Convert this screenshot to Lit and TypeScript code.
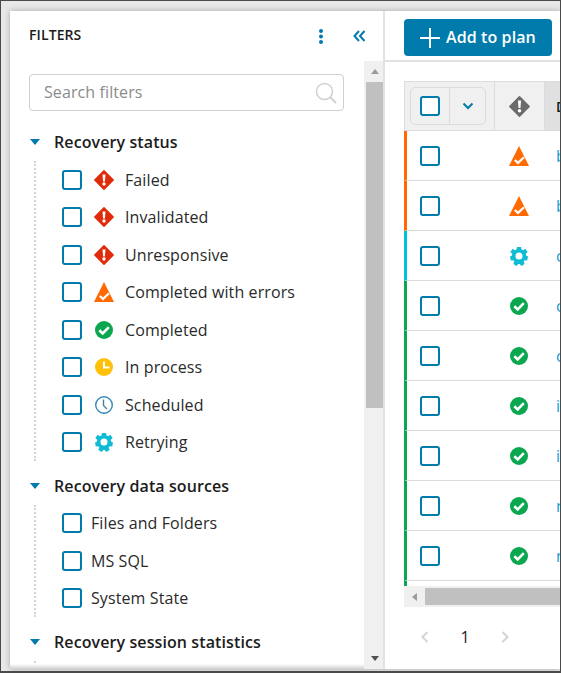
import { LitElement, html, css, svg } from "lit";
import { customElement } from "lit/decorators.js";

const diamond = (c: string, s = 20) => svg`<svg class="ic" width="${s}" height="${s}" viewBox="0 0 20 20"><path d="M10 .8 L19.200 10 L10 19.200 L.8 10 Z" fill="${c}" stroke="${c}" stroke-width="1.500" stroke-linejoin="round"/><path d="M8.500 4.400h3l-.6 7H9.100Z" fill="#fff"/><circle cx="10" cy="14" r="1.700" fill="#fff"/></svg>`;
const warn = svg`<svg class="ic" width="20" height="20" viewBox="0 0 20 20"><path d="M10 0 L20 20 H0 Z" fill="#ff6a00"/><path d="M5.800 14 L9 16.900 L15 11.200" fill="none" stroke="#fff" stroke-width="2.200"/></svg>`;
const ok = svg`<svg class="ic" width="20" height="20" viewBox="0 0 20 20"><circle cx="10" cy="10" r="9" fill="#0aa650"/><path d="M5.300 10.200 L8.700 13.400 L14.800 7.100" fill="none" stroke="#fff" stroke-width="2.600"/></svg>`;
const proc = svg`<svg class="ic" width="20" height="20" viewBox="0 0 20 20"><circle cx="10" cy="10" r="9" fill="#ffc107"/><path d="M10 4.500 V10.500 H15.500" fill="none" stroke="#fff" stroke-width="2"/></svg>`;
const sched = svg`<svg class="ic" width="20" height="20" viewBox="0 0 20 20"><circle cx="10" cy="10" r="8.300" fill="none" stroke="#2f8bb5" stroke-width="1.400"/><path d="M9.500 4.500 V10.500 L13 14" fill="none" stroke="#4a7f9a" stroke-width="1.400"/></svg>`;
const gear = svg`<svg class="ic" width="20" height="20" viewBox="0 0 20 20"><path fill="#0fbcd4" fill-rule="evenodd" d="M8 1h4l.5 2.500 1.600.7 2.200-1.400 2.400 3.200-1.900 1.700.2 1.800 2 1.100-.8 3.800-2.500-.1-1 1.500 1 2.300-3.400 1.900-1.500-2h-1.600l-1.500 2-3.400-1.900 1-2.300-1-1.500-2.500.1-.8-3.800 2-1.100.2-1.800L1.300 6l2.400-3.200 2.200 1.400 1.600-.7Z M10 6.500a3.500 3.500 0 1 0 0 7 3.500 3.500 0 0 0 0-7Z"/></svg>`;

const groups = [
  { title: "Recovery status", items: [
    ["Failed", diamond("#e02b0a")], ["Invalidated", diamond("#e02b0a")], ["Unresponsive", diamond("#e02b0a")],
    ["Completed with errors", warn], ["Completed", ok], ["In process", proc], ["Scheduled", sched], ["Retrying", gear],
  ] },
  { title: "Recovery data sources", items: [["Files and Folders", null], ["MS SQL", null], ["System State", null]] },
  { title: "Recovery session statistics", items: [] },
];

const rows = [
  ["#ff6a00", warn, "b"], ["#ff6a00", warn, "b"], ["#00c0e0", gear, "c"], ["#0aa650", ok, "c"], ["#0aa650", ok, "c"],
  ["#0aa650", ok, "i"], ["#0aa650", ok, "i"], ["#0aa650", ok, "n"], ["#0aa650", ok, "n"],
];

@customElement("app-root")
export class AppRoot extends LitElement {
  static styles = css`
    :host { display: block; width: 561px; height: 673px; overflow: hidden; font-family: "Open Sans", sans-serif; color: #1c1c1c; letter-spacing: .1px; }
    * { box-sizing: border-box; }
    .frame { width: 561px; height: 673px; background: #e8e8e8; border: 1px solid #4a4a4a; border-bottom-width: 2px; padding: 10px 0 2px 9px; overflow: hidden; }
    .panel { height: 100%; background: #fff; display: flex; overflow: hidden; box-shadow: 0 0 6px rgba(0,0,0,.28); }
    .side { width: 375px; flex: none; border-right: 2px solid #e2e2e2; display: flex; flex-direction: column; }
    .side-head { height: 50px; flex: none; display: flex; align-items: center; padding: 0 17px 0 19px; }
    .side-head b { font-size: 14px; font-weight: 600; flex: 1; position: relative; top: -2px; }
    .kebab { margin-right: 29px; display: block; }
    .side-body { flex: 1; display: flex; min-height: 0; }
    .filters { flex: 1; min-width: 0; padding: 13px 19px 0; overflow: hidden; position: relative; }
    .filters::after { content: ""; position: absolute; left: 0; right: 0; bottom: 0; height: 5px; background: linear-gradient(#fff, #cfcfcf); }
    .search { height: 37px; width: 315px; border: 1px solid #cfcfcf; border-radius: 4px; display: flex; align-items: center; justify-content: space-between; padding: 0 6px 2px 14px; font-size: 16px; color: #8b8b8b; }
    .search svg { margin-top: 2px; }
    .group-title { display: flex; align-items: center; font-size: 16px; font-weight: 600; height: 24px; margin-top: 19px; gap: 14px; }
    .group + .group .group-title { margin-top: 12.600px; }
    .tri { width: 0; height: 0; border: 5px solid transparent; border-top: 6px solid #007bab; border-bottom: 0; margin-left: 1px; }
    .items { margin: 7px 0 0 5px; border-left: 2px dotted #d4d4d4; padding-left: 26px; }
    .item { display: flex; align-items: center; height: 37.500px; font-size: 16px; color: #2a2a2a; }
    .cb { width: 20px; height: 20px; flex: none; border: 2px solid #007bab; border-radius: 3px; background: #fff; display: block; }
    .item .cb { margin-right: 9px; }
    .item .ic { margin: 0 11px 0 3px; flex: none; }
    .scroll-v { width: 19px; flex: none; background: #f0f0f0; display: flex; flex-direction: column; align-items: center; padding: 0 0 0 2px; }
    .scroll-v .up { width: 0; height: 0; border: 4.500px solid transparent; border-bottom: 5px solid #9a9a9a; border-top: 0; margin: 8px 0 8px; }
    .scroll-v .thumb { width: 17px; height: 326px; background: #c0c0c0; flex: none; }
    .scroll-v .sp { flex: 1; }
    .scroll-v .down { width: 0; height: 0; border: 4.500px solid transparent; border-top: 5px solid #505050; border-bottom: 0; margin-bottom: 8px; }
    .main { flex: 1; min-width: 0; display: flex; flex-direction: column; }
    .toolbar { height: 51px; flex: none; border-bottom: 2px solid #e2e2e2; padding: 8px 0 0 19px; }
    .btn { width: 148px; height: 37px; background: #007bab; color: #fff; border-radius: 4px; display: flex; align-items: center; gap: 6px; padding: 0 0 2px 16px; font-size: 16px; font-weight: 600; }
    .btn svg { margin-top: 2px; }
    .content { flex: 1; padding: 19px 0 0 19px; min-height: 0; display: flex; flex-direction: column; }
    .table { overflow: hidden; }
    .thead { display: flex; height: 50px; background: #f0f0f0; border: 1px solid #dcdcdc; border-right: 0; }
    .th1 { width: 90px; flex: none; border-right: 1px solid #dcdcdc; display: flex; align-items: center; padding-left: 5px; }
    .combo { width: 76px; height: 38px; border: 1px solid #dcdcdc; border-radius: 5px; display: flex; align-items: center; }
    .combo .l { width: 39px; padding-left: 9px; border-right: 1px solid #dcdcdc; height: 100%; display: flex; align-items: center; }
    .combo .r { flex: 1; display: flex; justify-content: center; }
    .th2 { width: 50px; flex: none; border-right: 1px solid #dcdcdc; display: flex; align-items: center; justify-content: center; }
    .th3 { flex: 1; background: #e0e0e0; font-size: 14px; font-weight: 600; display: flex; align-items: center; padding-left: 11px; }
    .row { display: flex; align-items: center; height: 50px; border-bottom: 1px solid #dcdcdc; border-left: 3px solid; padding-left: 13px; }
    .row .name { color: #1a9bd0; font-size: 16px; margin-left: 19.500px; }
    .row .st { width: 20px; display: flex; margin-left: 68.500px; margin-right: 8px; }
    .row .ic { flex: none; }
    .tail { height: 5px; border-left: 3px solid #0aa650; }
    .scroll-h { height: 21px; background: #f0f0f0; display: flex; align-items: center; }
    .scroll-h .left { width: 0; height: 0; border: 4.500px solid transparent; border-right: 5px solid #9a9a9a; border-left: 0; margin: 0 8px 0 8px; flex: none; }
    .scroll-h .thumb { flex: 1; height: 17px; background: #c0c0c0; }
    .pager { display: flex; align-items: center; gap: 30px; padding: 18px 0 0 16px; font-size: 16px; height: 42px; }
    .pager span { width: 10px; text-align: center; }
  `;

  render() {
    return html`<div class="frame"><div class="panel">
      <div class="side">
        <div class="side-head">
          <b>FILTERS</b>
          <svg class="kebab" width="6" height="16" viewBox="0 0 6 16"><circle cx="3" cy="3" r="2" fill="#007bab"/><circle cx="3" cy="8.500" r="2" fill="#007bab"/><circle cx="3" cy="14" r="2" fill="#007bab"/></svg>
          <svg width="13" height="12" viewBox="0 0 13 12"><path d="M6 1 L1.500 6 L6 11 M11.500 1 L7 6 L11.500 11" fill="none" stroke="#007bab" stroke-width="2"/></svg>
        </div>
        <div class="side-body">
          <div class="filters">
            <div class="search">Search filters
              <svg width="22" height="22" viewBox="0 0 22 22"><circle cx="9.500" cy="9.500" r="8" fill="none" stroke="#d0d0d0" stroke-width="1.500"/><path d="M15 15 L21 21" stroke="#d0d0d0" stroke-width="2"/></svg>
            </div>
            ${groups.map(g => html`<div class="group">
              <div class="group-title"><i class="tri"></i>${g.title}</div>
              <div class="items">${g.items.length ? g.items.map(([t, ic]) => html`<div class="item"><i class="cb"></i>${ic}${t}</div>`) : html`<div class="item"></div>`}</div>
            </div>`)}
          </div>
          <div class="scroll-v"><i class="up"></i><i class="thumb"></i><i class="sp"></i><i class="down"></i></div>
        </div>
      </div>
      <div class="main">
        <div class="toolbar"><div class="btn">
          <svg width="20" height="20" viewBox="0 0 20 20"><path d="M10 0 V20 M0 10 H20" stroke="#fff" stroke-width="2"/></svg>Add to plan
        </div></div>
        <div class="content">
          <div class="table">
            <div class="thead">
              <div class="th1"><div class="combo"><div class="l"><i class="cb"></i></div><div class="r">
                <svg width="12" height="8" viewBox="0 0 12 8"><path d="M1.500 1.500 L6 6 L10.500 1.500" fill="none" stroke="#007bab" stroke-width="2"/></svg>
              </div></div></div>
              <div class="th2">${diamond("#6b6b6b", 21)}</div>
              <div class="th3">D</div>
            </div>
            ${rows.map(([c, ic, t]) => html`<div class="row" style="border-left-color:${c}"><i class="cb"></i><div class="st">${ic}</div><span class="name">${t}</span></div>`)}
            <div class="tail"></div>
            <div class="scroll-h"><i class="left"></i><i class="thumb"></i></div>
          </div>
          <div class="pager">
            <svg width="10" height="14" viewBox="0 0 10 14"><path d="M7.500 2 L2.500 7 L7.500 12" fill="none" stroke="#d4d4d4" stroke-width="2"/></svg>
            <span>1</span>
            <svg width="10" height="14" viewBox="0 0 10 14"><path d="M2.500 2 L7.500 7 L2.500 12" fill="none" stroke="#d4d4d4" stroke-width="2"/></svg>
          </div>
        </div>
      </div>
    </div></div>`;
  }
}
